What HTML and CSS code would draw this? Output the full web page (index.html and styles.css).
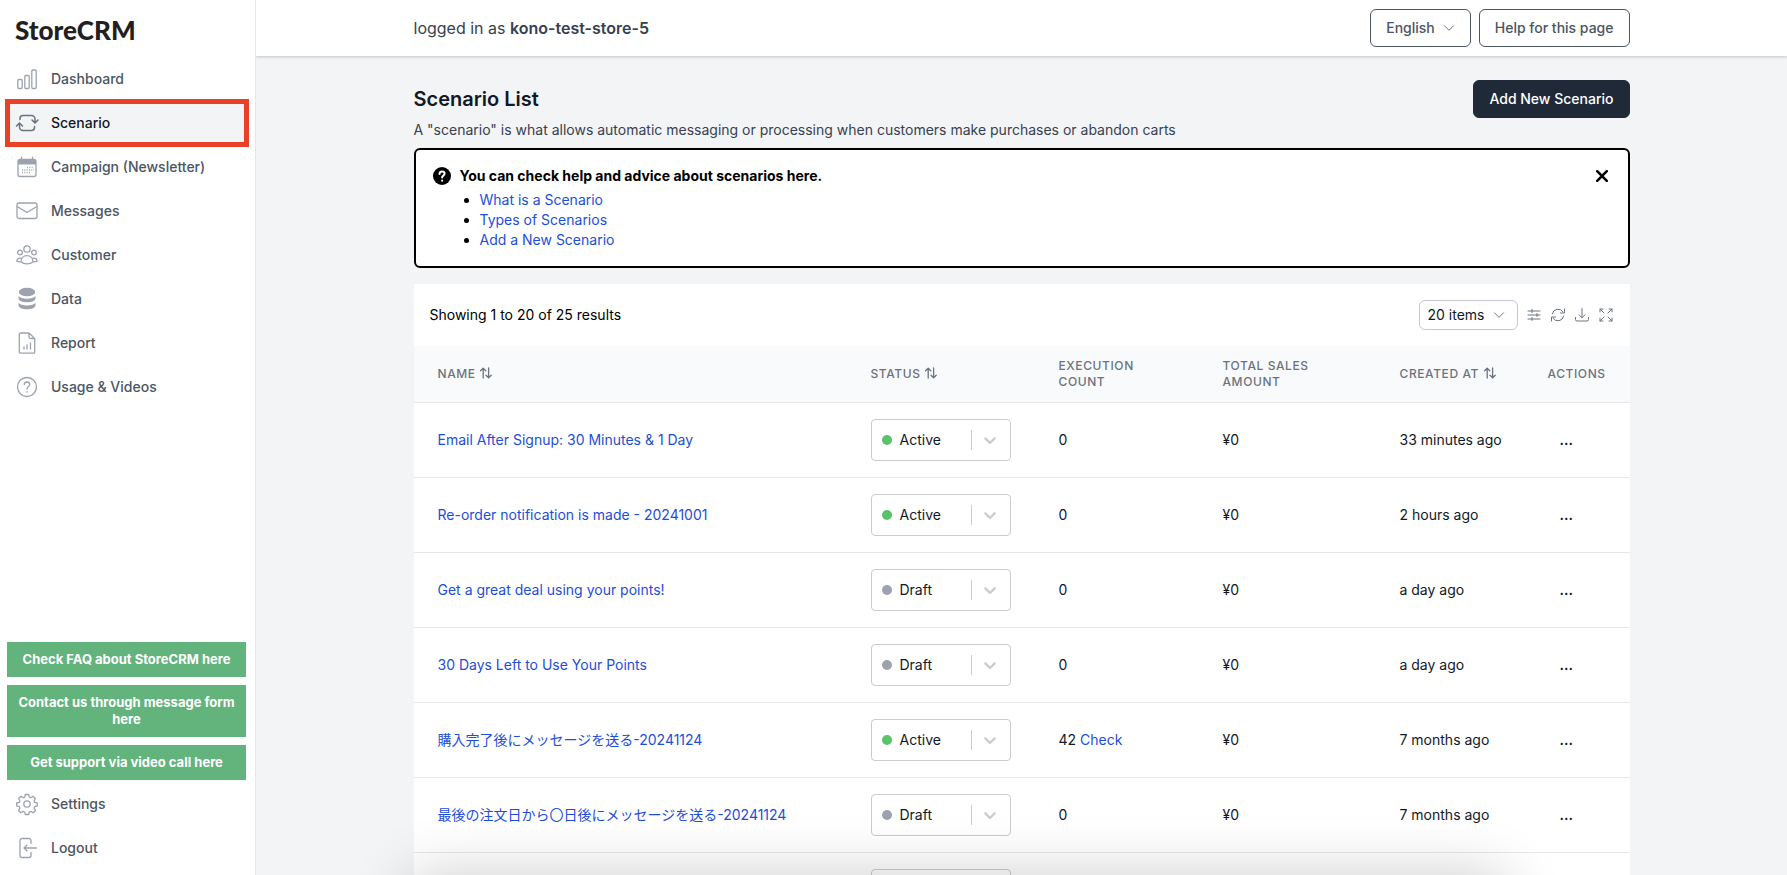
FILE: index.html
```html
<!DOCTYPE html>
<html lang="en">
<head>
<meta charset="utf-8">
<title>Scenario List - StoreCRM</title>
<link rel="stylesheet" href="styles.css">
</head>
<body>
<svg class="sprite" aria-hidden="true">
  <symbol id="i-sort" viewBox="0 0 14 14"><path d="M4.2 12V2.3M1.6 4.8l2.6-2.6 2.6 2.6M9.6 2v9.7M7 9.2l2.6 2.6 2.6-2.6"/></symbol>
  <symbol id="i-down" viewBox="0 0 12 12"><path d="M1.5 3.8L6 8.3l4.5-4.5"/></symbol>
  <symbol id="i-caret" viewBox="0 0 20 20"><path d="M4.516 7.548c0.436-0.446 1.043-0.481 1.576 0l3.908 3.747 3.908-3.747c0.533-0.481 1.141-0.446 1.574 0 0.436 0.445 0.408 1.197 0 1.615-0.406 0.418-4.695 4.502-4.695 4.502-0.217 0.223-0.502 0.335-0.787 0.335s-0.57-0.112-0.789-0.335c0 0-4.287-4.084-4.695-4.502s-0.436-1.17 0-1.615z"/></symbol>
</svg>
<div class="app">
  <aside class="sidebar">
    <a class="logo" href="#">StoreCRM</a>
    <nav class="nav">
      <a class="nav-item" href="#"><svg class="icon" viewBox="0 0 24 24"><rect x="2.8" y="12.5" width="4.4" height="9" rx="1.2"/><rect x="9.8" y="8.5" width="4.4" height="13" rx="1.2"/><rect x="16.8" y="3" width="4.4" height="18.500" rx="1.2"/></svg>Dashboard</a>
      <a class="nav-item active" href="#"><svg class="icon" viewBox="0 0 24 24"><path d="M5 8.500V7.500a3 3 0 0 1 3-3h8.500a3.500 3.500 0 0 1 3.500 3.500v3.500M17 9l3 3 3-3M19.500 15.500v1a3 3 0 0 1-3 3H8A3.500 3.500 0 0 1 4.500 16v-3.500M1.500 15l3-3 3 3"/></svg>Scenario</a>
      <a class="nav-item" href="#"><svg class="icon" viewBox="0 0 24 24"><rect x="3" y="4.500" width="18" height="17" rx="2.200"/><path class="solid" d="M3 5h18v4.500H3z"/><path d="M6.500 2.200v3M17.500 2.200v3"/><path class="dots" d="M12 12.500h7M7 15h12M7 17.500h9"/></svg>Campaign (Newsletter)</a>
      <a class="nav-item" href="#"><svg class="icon" viewBox="0 0 24 24"><rect x="2" y="4" width="20" height="15.500" rx="2"/><path d="M2.500 7.800L12 13.500l9.500-5.700"/></svg>Messages</a>
      <a class="nav-item" href="#"><svg class="icon" viewBox="0 0 24 24"><circle cx="12" cy="6" r="3.200"/><circle cx="5" cy="9.500" r="2.300"/><circle cx="19" cy="9.500" r="2.300"/><path d="M6 19c0-3.800 2.500-6.300 6-6.300s6 2.500 6 6.300c-1.600 1.300-3.700 1.800-6 1.800s-4.400-.5-6-1.800zM6.200 15.300c-2.300-.6-4.200.5-4.400 2.900 1 .5 2.400.8 4.200.7M17.800 15.300c2.300-.6 4.200.5 4.400 2.900-1 .5-2.400.8-4.200.7"/></svg>Customer</a>
      <a class="nav-item" href="#"><svg class="icon fill" viewBox="0 0 24 24"><ellipse cx="12" cy="5" rx="8.200" ry="4.300"/><path d="M3.500 9c1.500 1.800 4.600 2.700 8.500 2.700s7-.9 8.500-2.700v2.200c0 2.300-3.700 4.100-8.500 4.100s-8.500-1.800-8.500-4.100z"/><path d="M3.500 15.800c1.500 1.800 4.600 2.700 8.500 2.700s7-.9 8.500-2.700v2.400c0 2.300-3.700 4.100-8.500 4.100s-8.500-1.800-8.500-4.100z"/></svg>Data</a>
      <a class="nav-item" href="#"><svg class="icon" viewBox="0 0 24 24"><path d="M5.500 2H14l5.700 5.500V21a1.200 1.200 0 0 1-1.200 1.200h-13A1.200 1.200 0 0 1 4.300 21V3.200A1.200 1.200 0 0 1 5.500 2zM14 2v4c0 1 .5 1.500 1.500 1.500h4M9 15.800V18M12 14v4M15.500 12v6"/></svg>Report</a>
      <a class="nav-item" href="#"><svg class="icon" viewBox="0 0 24 24"><circle cx="12" cy="12" r="9.500"/><path d="M9.300 9.500C9.300 7.800 10.500 7 12 7s2.700.9 2.700 2.500c0 2-2.700 2.200-2.700 4.500M12 16.700v.5"/></svg>Usage &amp; Videos</a>
    </nav>
    <div class="support">
      <a class="support-btn" href="#">Check FAQ about StoreCRM here</a>
      <a class="support-btn" href="#">Contact us through message form here</a>
      <a class="support-btn" href="#">Get support via video call here</a>
    </div>
    <nav class="nav nav-bottom">
      <a class="nav-item" href="#"><svg class="icon" viewBox="0 0 24 24"><circle cx="12" cy="12" r="3.200"/><path d="M10.300 2.500h3.400l.6 2.600 1.500.6 2.300-1.400 2.300 2.400-1.300 2.300.6 1.400 2.600.6v2.900l-2.600.8-.6 1.400 1.400 2.300-2.300 2.400-2.400-1.400-1.500.6-.6 2.500h-3.400l-.6-2.500-1.500-.6-2.400 1.400-2.300-2.400 1.400-2.300-.6-1.400-2.600-.8V11l2.600-.6.6-1.400-1.300-2.300 2.300-2.400 2.300 1.400 1.500-.6z"/></svg>Settings</a>
      <a class="nav-item" href="#"><svg class="icon" viewBox="0 0 24 24"><path d="M16 7.500v-3a2 2 0 0 0-2-2H7a2 2 0 0 0-2 2v15a2 2 0 0 0 2 2h7a2 2 0 0 0 2-2v-3M21.500 12H9M12 9l-3 3 3 3"/></svg>Logout</a>
    </nav>
  </aside>
  <div class="content">
    <header class="topbar">
      <div class="container topbar-row">
        <p class="login">logged in as <strong>kono-test-store-5</strong></p>
        <div class="topbar-actions">
          <button class="btn" type="button">English <svg class="chev" viewBox="0 0 12 12"><use href="#i-down"/></svg></button>
          <button class="btn" type="button">Help for this page</button>
        </div>
      </div>
    </header>
    <main class="container">
      <div class="title-row">
        <h1>Scenario List</h1>
        <button class="btn btn-dark" type="button">Add New Scenario</button>
      </div>
      <p class="lead">A "scenario" is what allows automatic messaging or processing when customers make purchases or abandon carts</p>
      <section class="help">
        <svg class="help-icon" viewBox="0 0 18 18"><circle cx="9" cy="9" r="9"/><path d="M6.500 7C6.500 5.300 7.500 4.500 9 4.500s2.600.9 2.600 2.300C11.600 8.600 9.100 8.600 9.100 10.500M9.100 13.500v.3"/></svg>
        <div class="help-body">
          <h2>You can check help and advice about scenarios here.</h2>
          <ul>
            <li><a href="#">What is a Scenario</a></li>
            <li><a href="#">Types of Scenarios</a></li>
            <li><a href="#">Add a New Scenario</a></li>
          </ul>
        </div>
        <button class="close" type="button" aria-label="Close"><svg viewBox="0 0 12 12"><path d="M1.200 1.200l9.600 9.600M10.800 1.200l-9.600 9.600"/></svg></button>
      </section>
      <section class="card">
        <div class="toolbar">
          <p>Showing 1 to 20 of 25 results</p>
          <div class="tools">
            <button class="per-page" type="button">20 items <svg class="chev" viewBox="0 0 12 12"><use href="#i-down"/></svg></button>
            <button class="tool" type="button" aria-label="Filter"><svg viewBox="0 0 16 16"><path d="M2 4h12M2 8h12M2 12h12M6 2.500v3M11 6.500v3M6 10.500v3"/></svg></button>
            <button class="tool" type="button" aria-label="Refresh"><svg viewBox="0 0 16 16"><path d="M2.300 7A5.800 5.800 0 0 1 13 5M14.500 2v4h-4M13.700 9A5.800 5.800 0 0 1 3 11M1.500 14v-4h4"/></svg></button>
            <button class="tool" type="button" aria-label="Download"><svg viewBox="0 0 16 16"><path d="M8 1.500v9M5 7.800l3 3 3-3M1.500 10.500v2a1.500 1.500 0 0 0 1.500 1.500h10a1.500 1.500 0 0 0 1.500-1.500v-2"/></svg></button>
            <button class="tool" type="button" aria-label="Full screen"><svg viewBox="0 0 16 16"><path d="M2 5V2h3M2 2l4 4M11 2h3v3M14 2l-4 4M14 11v3h-3M14 14l-4-4M5 14H2v-3M2 14l4-4"/></svg></button>
          </div>
        </div>
        <table class="list">
          <colgroup><col class="c-name"><col class="c-status"><col class="c-count"><col class="c-sales"><col class="c-created"><col class="c-actions"></colgroup>
          <thead><tr>
            <th>Name <svg class="sort" viewBox="0 0 14 14"><use href="#i-sort"/></svg></th>
            <th>Status <svg class="sort" viewBox="0 0 14 14"><use href="#i-sort"/></svg></th>
            <th>Execution Count</th><th>Total Sales Amount</th>
            <th class="created">Created at <svg class="sort" viewBox="0 0 14 14"><use href="#i-sort"/></svg></th>
            <th>Actions</th>
          </tr></thead>
          <tbody>
            <tr><td><a href="#">Email After Signup: 30 Minutes &amp; 1 Day</a></td><td><button class="status on" type="button"><span>Active</span><svg class="caret" viewBox="0 0 20 20"><use href="#i-caret"/></svg></button></td><td>0</td><td>¥0</td><td class="created">33 minutes ago</td><td><button class="more" type="button">...</button></td></tr>
            <tr><td><a href="#">Re-order notification is made - 20241001</a></td><td><button class="status on" type="button"><span>Active</span><svg class="caret" viewBox="0 0 20 20"><use href="#i-caret"/></svg></button></td><td>0</td><td>¥0</td><td class="created">2 hours ago</td><td><button class="more" type="button">...</button></td></tr>
            <tr><td><a href="#">Get a great deal using your points!</a></td><td><button class="status" type="button"><span>Draft</span><svg class="caret" viewBox="0 0 20 20"><use href="#i-caret"/></svg></button></td><td>0</td><td>¥0</td><td class="created">a day ago</td><td><button class="more" type="button">...</button></td></tr>
            <tr><td><a href="#">30 Days Left to Use Your Points</a></td><td><button class="status" type="button"><span>Draft</span><svg class="caret" viewBox="0 0 20 20"><use href="#i-caret"/></svg></button></td><td>0</td><td>¥0</td><td class="created">a day ago</td><td><button class="more" type="button">...</button></td></tr>
            <tr><td><a href="#" lang="ja">購入完了後にメッセージを送る-20241124</a></td><td><button class="status on" type="button"><span>Active</span><svg class="caret" viewBox="0 0 20 20"><use href="#i-caret"/></svg></button></td><td>42 <a href="#">Check</a></td><td>¥0</td><td class="created">7 months ago</td><td><button class="more" type="button">...</button></td></tr>
            <tr><td><a href="#" lang="ja">最後の注文日から〇日後にメッセージを送る-20241124</a></td><td><button class="status" type="button"><span>Draft</span><svg class="caret" viewBox="0 0 20 20"><use href="#i-caret"/></svg></button></td><td>0</td><td>¥0</td><td class="created">7 months ago</td><td><button class="more" type="button">...</button></td></tr>
            <tr><td></td><td><button class="status" type="button" aria-label="Status"><span></span><svg class="caret" viewBox="0 0 20 20"><use href="#i-caret"/></svg></button></td><td></td><td></td><td></td><td></td></tr>
          </tbody>
        </table>
      </section>
    </main>
    <div class="edge-shadow"></div>
  </div>
</div>
</body>
</html>
```
FILE: styles.css
```css
* { box-sizing: border-box; }
body {
  margin: 0;
  font: 14px/20px Inter, "Noto Sans CJK JP", sans-serif;
  color: #111827;
  background: #f3f4f6;
}
h1, h2, p, ul { margin: 0; }
a { color: #1d4ed8; text-decoration: none; }
button { font: inherit; color: inherit; background: none; border: 0; padding: 0; cursor: pointer; }
svg { fill: none; stroke: currentColor; stroke-linecap: round; stroke-linejoin: round; flex: none; }
.sprite { display: none; }

.app { display: flex; height: 100vh; overflow: hidden; }

.sidebar {
  width: 256px;
  flex: none;
  display: flex;
  flex-direction: column;
  padding: 16px 9px 7px 7px;
  background: #fff;
  border-right: 1px solid #e5e7eb;
}
.logo {
  padding: 0 8px;
  font: 900 26px/28px Lato, sans-serif;
  color: #231f20;
}
.nav { display: flex; flex-direction: column; gap: 4px; padding-top: 15px; }
.nav-bottom { padding-top: 4px; }
.nav-item {
  display: flex;
  align-items: center;
  gap: 12px;
  height: 40px;
  padding: 0 8px;
  font-weight: 500;
  color: #4b5563;
}
.nav-item.active {
  margin: 0 1px 0 2px;
  padding: 0 6px;
  color: #111827;
  background: #f3f4f6;
  outline: 5px solid #ea4025;
  outline-offset: -1px;
}
.icon { width: 24px; height: 24px; color: #9ca3af; stroke-width: 1.3; }
.active .icon { color: #6b7280; stroke-width: 1.5; }
.icon .solid, .icon.fill { fill: currentColor; stroke: none; }
.icon .dots { stroke-dasharray: 1 1.3; stroke-linecap: butt; }
.support { display: flex; flex-direction: column; gap: 8px; margin-top: auto; }
.support-btn {
  padding: 9px 8px;
  font-size: 13px;
  line-height: 17px;
  font-weight: 700;
  text-align: center;
  color: #fff;
  background: #62b37c;
}

.content { position: relative; flex: 1; min-width: 0; overflow: hidden; }
.container { max-width: 1280px; margin: 0 auto; padding: 0 32px; }
.topbar { background: #fff; box-shadow: 0 1px 3px rgba(0, 0, 0, .2); }
.topbar-row { display: flex; align-items: center; justify-content: space-between; height: 56px; }
.login { font-size: 16px; color: #374151; }
.login strong { font-weight: 600; }
.topbar-actions { display: flex; gap: 8px; }
.btn {
  display: flex;
  align-items: center;
  gap: 8px;
  height: 38px;
  padding: 0 15px;
  font-weight: 500;
  color: #4b5563;
  border: 1px solid #4b5563;
  border-radius: 6px;
}
.btn-dark { color: #fff; background: #1f2937; border-color: #1f2937; }
.chev { width: 12px; height: 12px; color: #6b7280; }

.title-row { display: flex; align-items: center; justify-content: space-between; padding-top: 24px; }
h1 { font-size: 20px; line-height: 28px; font-weight: 600; }
.lead { padding: 2px 0 8px; color: #374151; }
.help {
  display: flex;
  align-items: flex-start;
  gap: 9px;
  padding: 16px 20px 16px 17px;
  color: #000;
  background: #fff;
  border: 2px solid #000;
  border-radius: 6px;
}
.help-icon { width: 18px; height: 18px; margin-top: 1px; stroke: #fff; stroke-width: 2; }
.help-icon circle { fill: #000; stroke: none; }
.help-body { flex: 1; }
h2 { font-size: 14px; line-height: 20px; font-weight: 700; padding-bottom: 4px; }
.help ul { padding-left: 20px; }
.close { display: flex; padding: 4px 0; }
.close svg { width: 12px; height: 12px; stroke-width: 2.5; }

.card { margin-top: 16px; background: #fff; }
.toolbar { display: flex; align-items: center; justify-content: space-between; padding: 16px; color: #000; }
.tools { display: flex; align-items: center; gap: 8px; }
.per-page {
  display: flex;
  align-items: center;
  gap: 8px;
  height: 30px;
  padding: 0 12px 0 8px;
  color: #111827;
  border: 1px solid #c3c7cf;
  border-radius: 6px;
}
.tool { display: flex; color: #6b7280; }
.tool svg { width: 16px; height: 16px; }

.list { width: 100%; border-collapse: collapse; table-layout: fixed; }
.c-name { width: 433px; }
.c-status { width: 188px; }
.c-count { width: 164px; }
.c-sales { width: 177px; }
.c-created { width: 148px; }
.list th {
  height: 56px;
  padding: 0 24px;
  font-size: 12px;
  line-height: 16px;
  font-weight: 500;
  letter-spacing: .05em;
  text-align: left;
  text-transform: uppercase;
  color: #6b7280;
  background: #f9fafb;
}
.list td { height: 75px; padding: 16px 24px; }
.list td:last-child { padding-left: 34px; }
.list .created { padding-right: 0; white-space: nowrap; }
.list tbody tr { border-top: 1px solid #e5e7eb; }
.sort { width: 14px; height: 14px; vertical-align: -2px; stroke-width: 1.3; }
.status {
  display: flex;
  align-items: center;
  width: 140px;
  height: 42px;
  padding: 0 10px;
  border: 1px solid #ccc;
  border-radius: 4px;
}
.status::before { content: ""; width: 10px; height: 10px; margin-right: 8px; border-radius: 50%; background: #9ca3af; }
.status.on::before { background: #5ac268; }
.status span { flex: 1; text-align: left; }
.caret {
  width: 29px;
  height: 20px;
  padding-left: 8px;
  border-left: 1px solid #ccc;
  fill: #ccc;
  stroke: none;
}
.more { font-weight: 600; padding: 0 2px; }
.edge-shadow {
  position: absolute;
  left: 154px;
  right: 282px;
  top: 100%;
  height: 100px;
  box-shadow: 0 0 60px rgba(0, 0, 0, .2);
}
```
